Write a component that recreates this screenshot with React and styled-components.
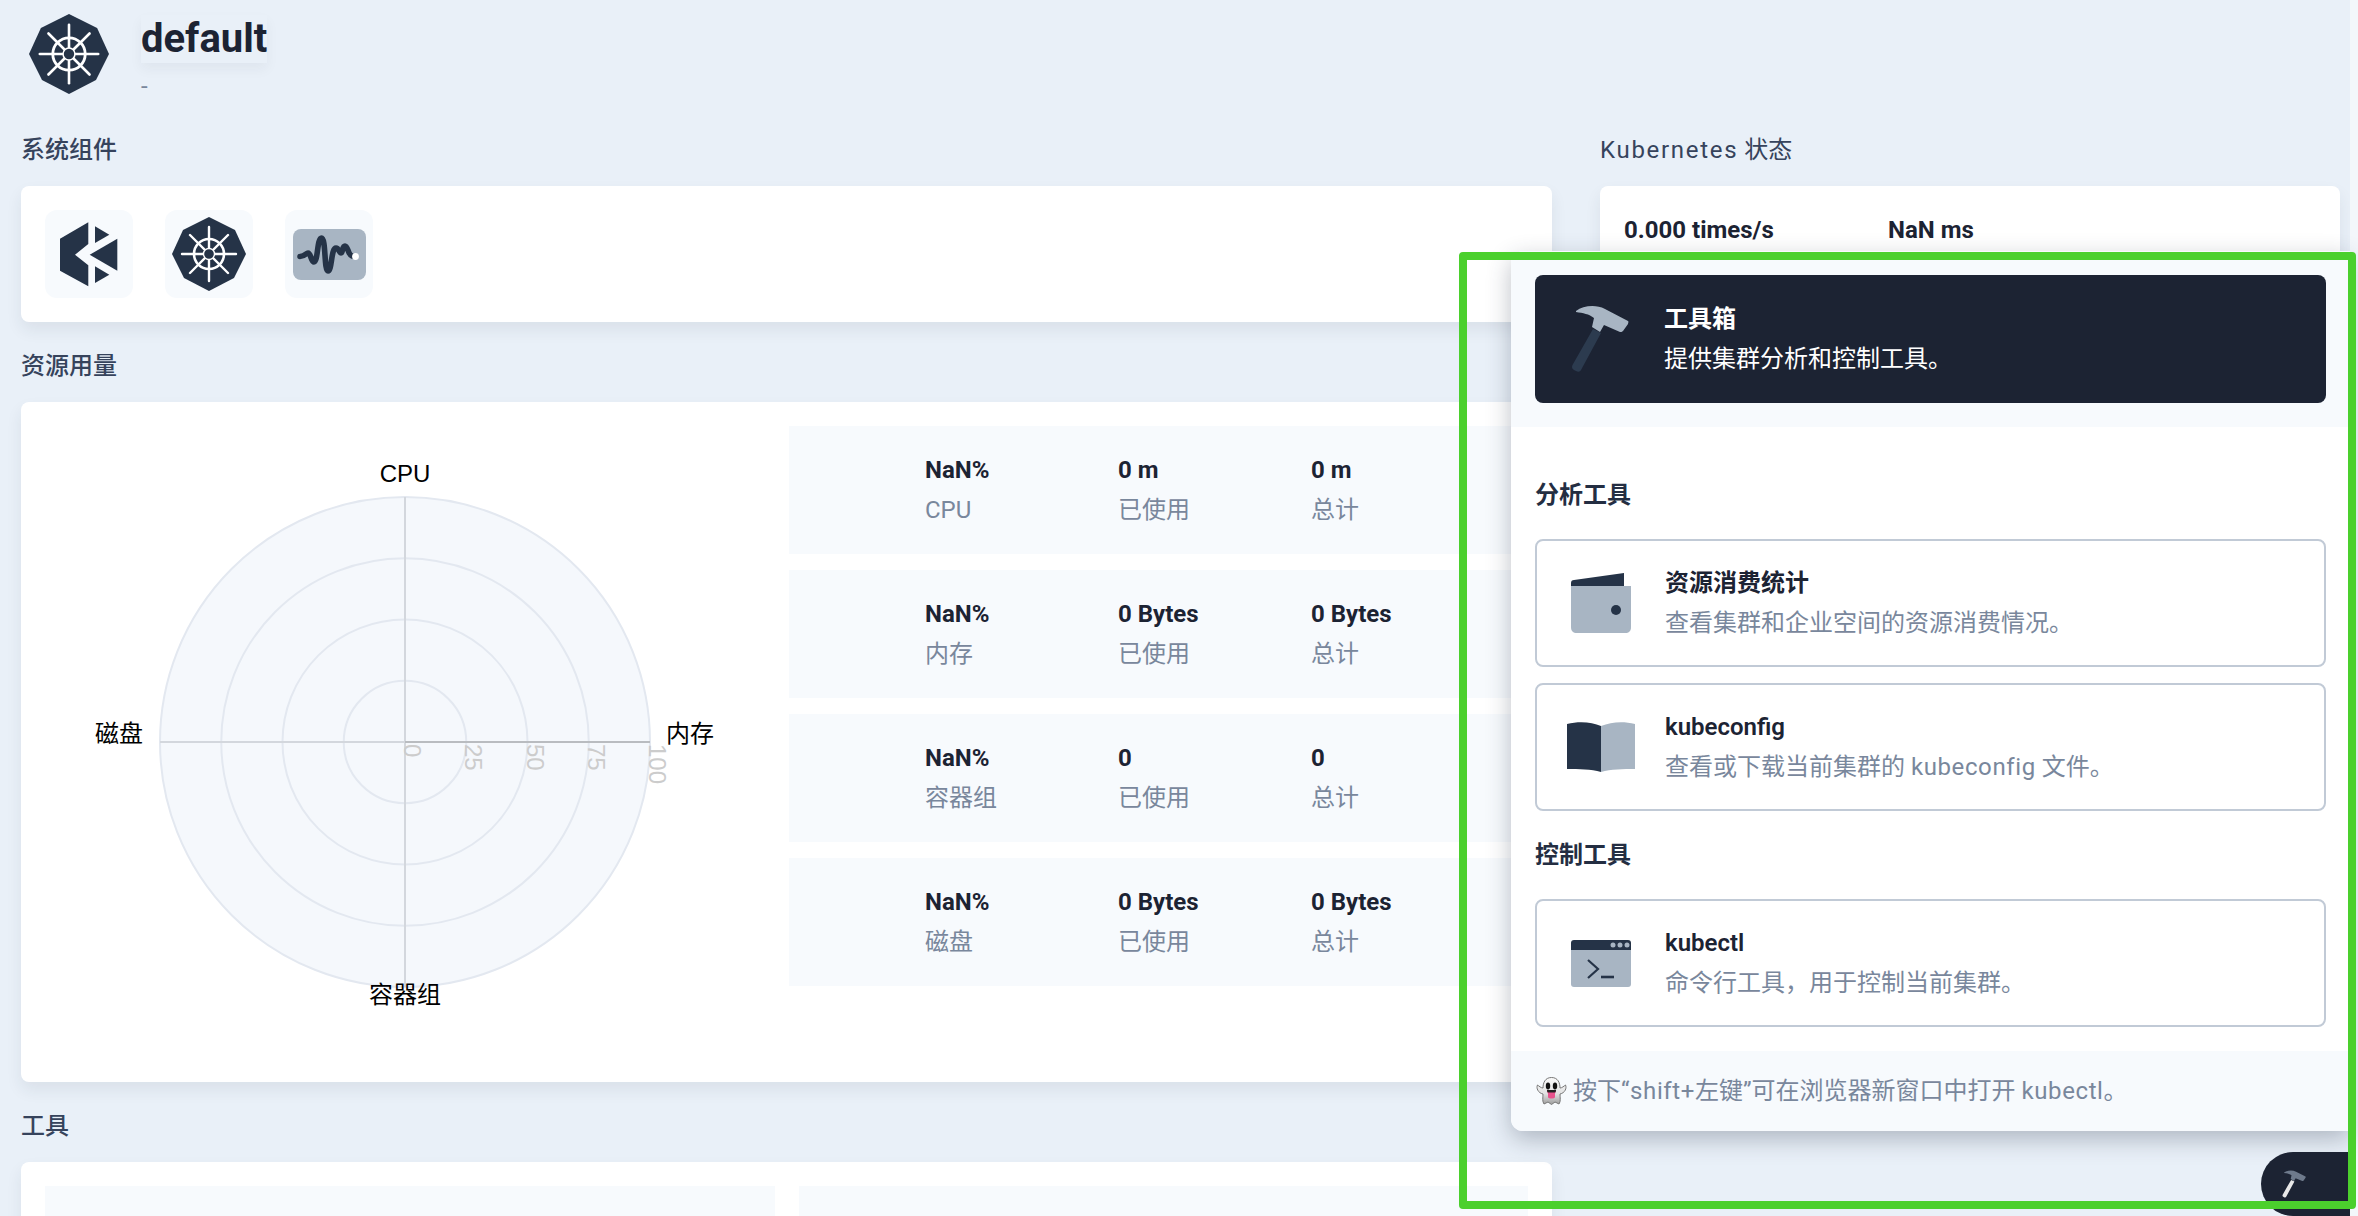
import React from 'react'
import styled, { createGlobalStyle } from 'styled-components'

const GlobalStyle = createGlobalStyle`
  html, body {
    margin: 0;
    height: 100%;
    overflow: hidden;
    background: #e9f0f8;
  }
  * { box-sizing: border-box; }
  body {
    font-family: Roboto, "Noto Sans CJK SC", sans-serif;
    font-size: 24px;
    line-height: 40px;
    color: #1c2333;
  }
`

const Page = styled.div`
  position: relative;
  display: flex;
  height: 1216px;
  overflow: hidden;
`

const Main = styled.main`
  flex: 1;
  min-width: 0;
  padding: 12px 10px 0 21px;
`

const ScrollTrack = styled.div`
  flex: 0 0 8px;
  background: #f3f7fb;
`

const Header = styled.header`
  display: flex;
  gap: 32px;
  padding-left: 8px;
  height: 90px;
`

const LogoWrap = styled.div`
  margin-top: 2px;
  width: 80px;
  height: 80px;
`

const ClusterName = styled.h1`
  margin: 3px 0 0;
  width: fit-content;
  font-size: 40px;
  line-height: 48px;
  font-weight: 700;
  color: #1c2333;
  box-shadow: 0 6px 12px rgba(36, 46, 66, 0.05);
`

const ClusterDesc = styled.div`
  margin-top: 7px;
  line-height: 32px;
  color: #79879c;
`

const Columns = styled.div`
  display: grid;
  grid-template-columns: 1fr 740px;
  column-gap: 48px;
  margin-top: 32px;
`

const Heading = styled.h2`
  margin: ${props => (props.$first ? '0' : '28px')} 0 20px;
  font-size: 24px;
  line-height: 32px;
  font-weight: ${props => (props.$light ? 400 : 500)};
  color: #36435c;
`

const Latin = styled.span`
  letter-spacing: ${props => props.$spacing || '0.6px'};
`

const Card = styled.section`
  background: #fff;
  border-radius: 8px;
  padding: 24px;
  box-shadow: 0 8px 16px rgba(36, 46, 66, 0.08);
`

const ComponentRow = styled.div`
  display: flex;
  gap: 32px;
`

const ComponentTile = styled.div`
  width: 88px;
  height: 88px;
  display: flex;
  align-items: center;
  justify-content: center;
  background: #f7fafd;
  border-radius: 12px;
`

const StatusRow = styled.div`
  display: flex;
  height: 88px;
  font-weight: 700;
`

const StatusItem = styled.div`
  width: 264px;
`

const ResourceBody = styled.div`
  display: flex;
  gap: 24px;
`

const ChartSvg = styled.svg`
  flex: 0 0 720px;
  display: block;
  font-family: "Liberation Sans", "Noto Sans CJK SC", sans-serif;
  font-size: 24px;
`

const ResourceList = styled.div`
  flex: 1;
  display: flex;
  flex-direction: column;
  gap: 16px;
`

const ResourceRow = styled.div`
  display: flex;
  align-items: center;
  height: 128px;
  padding-left: 136px;
  background: #f7fafd;
`

const ResourceCol = styled.div`
  flex: 0 0 193px;
`

const Value = styled.div`
  font-weight: 700;
  color: #1c2333;
  white-space: nowrap;
`

const Label = styled.div`
  color: #79879c;
  white-space: nowrap;
`

const ToolGrid = styled.div`
  display: grid;
  grid-template-columns: 1fr 1fr;
  gap: 24px;
`

const ToolTile = styled.div`
  height: 128px;
  background: #f7fafd;
`

const Panel = styled.aside`
  position: absolute;
  right: 8px;
  bottom: 85px;
  width: 839px;
  height: 880px;
  display: flex;
  flex-direction: column;
  background: #fff;
  border-radius: 12px 0 0 12px;
  overflow: hidden;
  box-shadow: 0 8px 24px rgba(36, 46, 66, 0.3);
`

const PanelHead = styled.div`
  padding: 24px;
  background: #f7fafd;
`

const HeadBanner = styled.div`
  display: flex;
  align-items: center;
  height: 128px;
  padding-left: 33px;
  background: #1c2333;
  border-radius: 8px;
  color: #fff;
`

const IconSlot = styled.div`
  flex: 0 0 64px;
  min-width: 0;
  display: flex;
  align-items: center;
  justify-content: center;
  margin-right: 32px;

  svg {
    flex: none;
  }
`

const BannerTitle = styled.div`
  font-weight: 600;
`

const PanelBody = styled.div`
  flex: 1;
  padding: 24px;
`

const GroupTitle = styled.h3`
  margin: 28px 0;
  font-size: 24px;
  line-height: 32px;
  font-weight: 600;
  color: #242e42;
`

const ToolList = styled.div`
  display: flex;
  flex-direction: column;
  gap: 16px;
`

const ToolCard = styled.div`
  display: flex;
  align-items: center;
  height: 128px;
  padding-left: 32px;
  border: 2px solid #c1cad6;
  border-radius: 8px;
`

const ToolTitle = styled.div`
  font-weight: 600;
  color: #1c2333;
`

const PanelFoot = styled.div`
  display: flex;
  align-items: center;
  gap: 6px;
  height: 80px;
  padding: 0 24px 0 25px;
  background: #f7fafd;
  color: #79879c;
`

const FloatButton = styled.div`
  position: absolute;
  right: 8px;
  bottom: 0;
  width: 89px;
  height: 64px;
  padding: 18px 0 0 21px;
  background: #1c2333;
  border-radius: 32px 0 0 32px;
`

const Highlight = styled.div`
  position: absolute;
  right: 2px;
  bottom: 7px;
  width: 897px;
  height: 957px;
  border: 8px solid #4bd02d;
  border-radius: 4px;
  pointer-events: none;
`

const NAVY = '#253347'
const SLATE = '#a8b5c3'

function KsLogo() {
  return (
    <svg width="58" height="65" viewBox="0 0 58 65" fill={NAVY}>
      <polygon points="28.3,0.3 0,16.7 0,48.7 28.3,64.3 28.3,43.3 15,32.7 28.3,22" />
      <polygon points="35,4.3 49.3,12.7 35,21" />
      <polygon points="29.7,32.7 57.3,16.7 57.3,48.7" />
      <polygon points="35,44.3 49.3,52.7 35,61" />
    </svg>
  )
}

function K8sLogo({ size }) {
  const spokes = [
    [37, 10, 37, 64],
    [10, 37, 64, 37],
    [18, 18, 56, 56],
    [56, 18, 18, 56],
  ]
  return (
    <svg width={size} height={size} viewBox="0 0 74 74">
      <polygon points="37,0 63,13 74,37 62,61 37,74 12,61 0,37 11,13" fill={NAVY} />
      {spokes.map(([x1, y1, x2, y2]) => (
        <line key={`${x1}${y1}`} x1={x1} y1={y1} x2={x2} y2={y2} stroke="#fff" strokeWidth="2.4" strokeLinecap="round" />
      ))}
      <circle cx="37" cy="37" r="15" fill="none" stroke="#fff" strokeWidth="2.6" />
      <circle cx="37" cy="37" r="5.5" fill={NAVY} stroke="#fff" strokeWidth="1.4" />
    </svg>
  )
}

function MonitorLogo() {
  return (
    <svg width="73" height="51" viewBox="0 0 73 51">
      <rect width="73" height="51" rx="8" fill={SLATE} />
      <path
        d="M7 27.5C12 27.5 13 24 15 24C18 24 18 33 21 33C25 33 24 9 28.5 9C33 9 31 42 35 42C39 42 38 19 43 19C46 19 46 24 48 24C50 24 49 17 52 17C55 17 55 26 59 27"
        fill="none"
        stroke={NAVY}
        strokeWidth="5.6"
        strokeLinecap="round"
      />
      <circle cx="62.5" cy="27.5" r="3.4" fill="#fff" />
    </svg>
  )
}

function Hammer({ width, height, head, handle }) {
  return (
    <svg width={width} height={height} viewBox="0 0 58 68">
      <path d="M22 24L30 28L10 65C9 67 7 67 5 66L3 65C1 64 0.5 62 1.5 60Z" fill={handle} />
      <path d="M5 6C12 1 24 -1 34 4L57 16C58 17 57 18 57 19L52 26C51 27 50 27 49 27L33 20L29 27L21 22L23 13C18 9 12 8 5 7Z" fill={head} />
    </svg>
  )
}

function WalletIcon() {
  return (
    <svg width="60" height="60" viewBox="0 0 60 60">
      <path d="M3 7L53 0V14H0V10C0 8 1 7 3 7Z" fill={NAVY} />
      <path d="M0 13H60V54C60 58 58 60 54 60H6C2 60 0 58 0 54Z" fill={SLATE} />
      <circle cx="45" cy="37" r="5" fill={NAVY} />
    </svg>
  )
}

function BookIcon() {
  return (
    <svg width="68" height="50" viewBox="0 0 68 50">
      <path d="M0 2C12 -1 25 0 34 4V50C24 47 12 47 0 47Z" fill={NAVY} />
      <path d="M34 4C44 0 56 -1 68 2V47C56 47 44 47 34 50Z" fill={SLATE} />
    </svg>
  )
}

function TerminalIcon() {
  return (
    <svg width="60" height="47" viewBox="0 0 60 47">
      <path d="M0 9H60V44C60 46 59 47 57 47H3C1 47 0 46 0 44Z" fill={SLATE} />
      <path d="M3 0H57C59 0 60 1 60 3V10H0V3C0 1 1 0 3 0Z" fill={NAVY} />
      <circle cx="42" cy="5" r="2.5" fill={SLATE} />
      <circle cx="49" cy="5" r="2.5" fill={SLATE} />
      <circle cx="56" cy="5" r="2.5" fill={SLATE} />
      <path d="M17 20L27 29L17 38" fill="none" stroke={NAVY} strokeWidth="2.2" />
      <line x1="30" y1="37" x2="43" y2="37" stroke={NAVY} strokeWidth="2.6" />
    </svg>
  )
}

function GhostIcon() {
  return (
    <svg width="31" height="28" viewBox="0 0 31 28">
      <defs>
        <linearGradient id="ghostBody" x1="0" y1="0" x2="0" y2="1">
          <stop offset="0" stopColor="#fafafa" />
          <stop offset="0.6" stopColor="#e2e2e2" />
          <stop offset="1" stopColor="#9c9c9c" />
        </linearGradient>
      </defs>
      <path
        d="M15.5 0.5C9 0.5 7 6 7 11C5 11 3 9 1.5 8C0 11 2 16 7 17C7 21 6 24 8 27L12 25L15.5 27.5L19 25L23 27C25 24 24 21 24 17C29 16 31 11 29.5 8C28 9 26 11 24 11C24 6 22 0.5 15.5 0.5Z"
        fill="url(#ghostBody)"
        stroke="#777"
        strokeWidth="1"
      />
      <ellipse cx="12" cy="9" rx="2.2" ry="3.4" fill="#111" />
      <ellipse cx="19" cy="9" rx="2.2" ry="3.4" fill="#111" />
      <path d="M11 13H20C20 15 19.5 16 19 16.5V20C19 22 12 22 12 20V16.5C11.5 16 11 15 11 13Z" fill="#e8528c" />
      <path d="M11 13H20C20 14.5 19.6 15 19 15.5H12C11.4 15 11 14.5 11 13Z" fill="#222" />
    </svg>
  )
}

const TICKS = [0, 25, 50, 75, 100]
const CX = 360
const CY = 316
const RADIUS = 245

function RadarChart() {
  return (
    <ChartSvg width="720" height="632" viewBox="0 0 720 632">
      <circle cx={CX} cy={CY} r={RADIUS} fill="#f5f8fc" />
      {TICKS.slice(1).map(t => (
        <circle key={t} cx={CX} cy={CY} r={(RADIUS * t) / 100} fill="none" stroke="#e3e8f0" strokeWidth="2" />
      ))}
      <line x1={CX} y1={CY - RADIUS} x2={CX} y2={CY + RADIUS} stroke="#d3d7dd" strokeWidth="2" />
      <line x1={CX - RADIUS} y1={CY} x2={CX} y2={CY} stroke="#d3d7dd" strokeWidth="2" />
      <line x1={CX} y1={CY} x2={CX + RADIUS} y2={CY} stroke="#b9bcc0" strokeWidth="2" />
      {TICKS.map(t => {
        const x = CX + (RADIUS * t) / 100 - 1
        return (
          <text key={t} x={x} y={CY + 2} fill="#ccc" transform={`rotate(90 ${x} ${CY + 2})`}>
            {t}
          </text>
        )
      })}
      <text x={CX} y="56" textAnchor="middle" fill="#000">CPU</text>
      <text x="621" y="316" fill="#000">内存</text>
      <text x="98" y="316" textAnchor="end" fill="#000">磁盘</text>
      <text x={CX} y="577" textAnchor="middle" fill="#000">容器组</text>
    </ChartSvg>
  )
}

const RESOURCES = [
  { name: 'CPU', used: '0 m', total: '0 m' },
  { name: '内存', used: '0 Bytes', total: '0 Bytes' },
  { name: '容器组', used: '0', total: '0' },
  { name: '磁盘', used: '0 Bytes', total: '0 Bytes' },
]

export default function App() {
  return (
    <Page>
      <GlobalStyle />
      <Main>
        <Header>
          <LogoWrap>
            <K8sLogo size={80} />
          </LogoWrap>
          <div>
            <ClusterName>default</ClusterName>
            <ClusterDesc>-</ClusterDesc>
          </div>
        </Header>

        <Columns>
          <div>
            <Heading $first>系统组件</Heading>
            <Card>
              <ComponentRow>
                <ComponentTile><KsLogo /></ComponentTile>
                <ComponentTile><K8sLogo size={74} /></ComponentTile>
                <ComponentTile><MonitorLogo /></ComponentTile>
              </ComponentRow>
            </Card>

            <Heading>资源用量</Heading>
            <Card>
              <ResourceBody>
                <RadarChart />
                <ResourceList>
                  {RESOURCES.map(r => (
                    <ResourceRow key={r.name}>
                      <ResourceCol>
                        <Value>NaN%</Value>
                        <Label>{r.name}</Label>
                      </ResourceCol>
                      <ResourceCol>
                        <Value>{r.used}</Value>
                        <Label>已使用</Label>
                      </ResourceCol>
                      <ResourceCol>
                        <Value>{r.total}</Value>
                        <Label>总计</Label>
                      </ResourceCol>
                    </ResourceRow>
                  ))}
                </ResourceList>
              </ResourceBody>
            </Card>

            <Heading>工具</Heading>
            <Card>
              <ToolGrid>
                <ToolTile />
                <ToolTile />
              </ToolGrid>
            </Card>
          </div>

          <div>
            <Heading $first $light><Latin $spacing="1.7px">Kubernetes</Latin> 状态</Heading>
            <Card>
              <StatusRow>
                <StatusItem>0.000 times/s</StatusItem>
                <StatusItem>NaN ms</StatusItem>
              </StatusRow>
            </Card>
          </div>
        </Columns>
      </Main>
      <ScrollTrack />

      <Panel>
        <PanelHead>
          <HeadBanner>
            <IconSlot>
              <Hammer width={58} height={68} head={SLATE} handle="#2c3b4f" />
            </IconSlot>
            <div>
              <BannerTitle>工具箱</BannerTitle>
              <div>提供集群分析和控制工具。</div>
            </div>
          </HeadBanner>
        </PanelHead>

        <PanelBody>
          <GroupTitle>分析工具</GroupTitle>
          <ToolList>
            <ToolCard>
              <IconSlot><WalletIcon /></IconSlot>
              <div>
                <ToolTitle>资源消费统计</ToolTitle>
                <Label>查看集群和企业空间的资源消费情况。</Label>
              </div>
            </ToolCard>
            <ToolCard>
              <IconSlot><BookIcon /></IconSlot>
              <div>
                <ToolTitle>kubeconfig</ToolTitle>
                <Label>查看或下载当前集群的 <Latin>kubeconfig</Latin> 文件。</Label>
              </div>
            </ToolCard>
          </ToolList>

          <GroupTitle>控制工具</GroupTitle>
          <ToolList>
            <ToolCard>
              <IconSlot><TerminalIcon /></IconSlot>
              <div>
                <ToolTitle>kubectl</ToolTitle>
                <Label>命令行工具，用于控制当前集群。</Label>
              </div>
            </ToolCard>
          </ToolList>
        </PanelBody>

        <PanelFoot>
          <GhostIcon />
          <span>按下<Latin>“shift+</Latin>左键”可在浏览器新窗口中打开 <Latin>kubectl</Latin>。</span>
        </PanelFoot>
      </Panel>

      <FloatButton>
        <Hammer width={24} height={28} head="#6e7a8c" handle="#e8e8e8" />
      </FloatButton>

      <Highlight />
    </Page>
  )
}
